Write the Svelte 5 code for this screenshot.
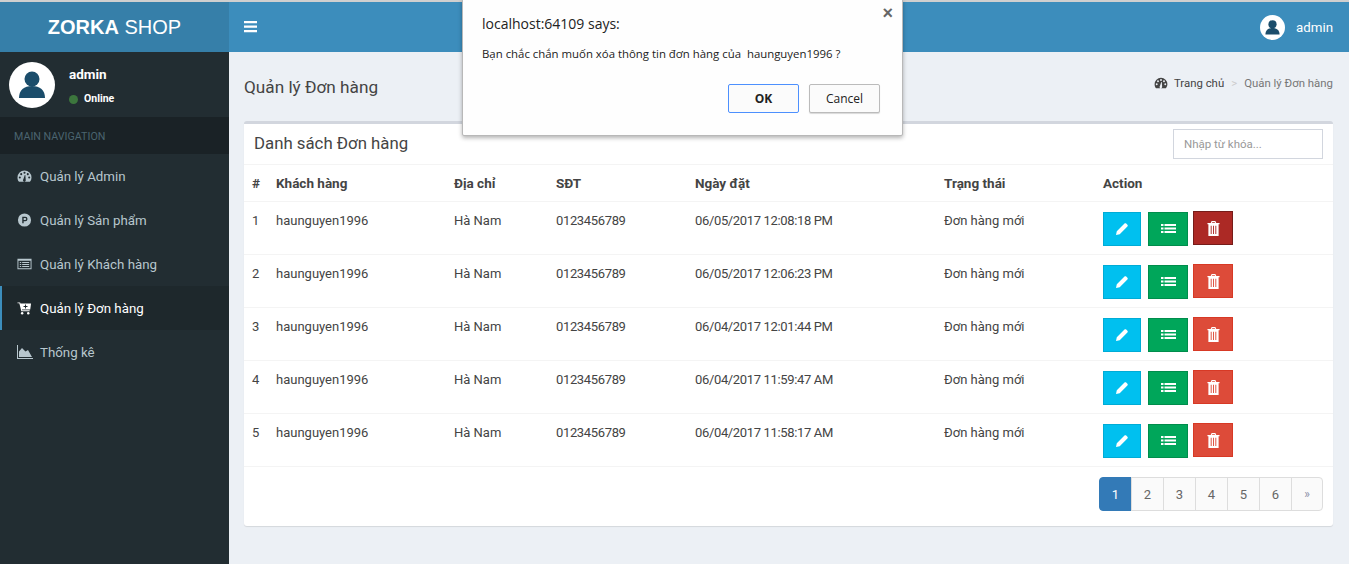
<script>
  const menu = [
    { label: "Quản lý Admin", icon: "gauge" },
    { label: "Quản lý Sản phẩm", icon: "product" },
    { label: "Quản lý Khách hàng", icon: "list" },
    { label: "Quản lý Đơn hàng", icon: "cart", active: true },
    { label: "Thống kê", icon: "chart" }
  ];

  const orders = [
    { id: 1, date: "06/05/2017 12:08:18 PM", hover: true },
    { id: 2, date: "06/05/2017 12:06:23 PM" },
    { id: 3, date: "06/04/2017 12:01:44 PM" },
    { id: 4, date: "06/04/2017 11:59:47 AM" },
    { id: 5, date: "06/04/2017 11:58:17 AM" }
  ];

  const pages = ["1", "2", "3", "4", "5", "6", "»"];
</script>

{#snippet avatar(cls)}
  <svg class={cls} viewBox="0 0 46 46" aria-hidden="true">
    <circle cx="23" cy="23" r="23" fill="#fff" />
    <circle cx="23" cy="17" r="7.5" fill="#1b4d6b" />
    <path d="M10 36c0-8 5-12 13-12s13 4 13 12z" fill="#1b4d6b" />
  </svg>
{/snippet}

{#snippet gauge(cls)}
  <svg class={cls} viewBox="0 0 16 14" aria-hidden="true">
    <path fill-rule="evenodd" fill="currentColor" d="M8 1a7.5 7.5 0 0 0-7.5 7.5c0 1.800.6 3.400 1.700 4.700h11.600a7.400 7.400 0 0 0 1.700-4.700A7.500 7.500 0 0 0 8 1zM3 9.600a1.100 1.100 0 1 1 0-2.200 1.100 1.100 0 0 1 0 2.200zm1.500-3.500a1.100 1.100 0 1 1 0-2.200 1.100 1.100 0 0 1 0 2.200zM8 4.600a1.100 1.100 0 1 1 0-2.200 1.100 1.100 0 0 1 0 2.200zm3.500 1.500a1.100 1.100 0 1 1 0-2.200 1.100 1.100 0 0 1 0 2.200zM13 9.600a1.100 1.100 0 1 1 0-2.200 1.100 1.100 0 0 1 0 2.200zM9.300 11.200a1.500 1.500 0 1 1-2.500-.7l1.500-4.700h.6z" />
  </svg>
{/snippet}

{#snippet icon(name)}
  {#if name === "gauge"}
    {@render gauge("nav-icon")}
  {:else if name === "product"}
    <svg class="nav-icon" viewBox="0 0 16 14" aria-hidden="true">
      <path fill-rule="evenodd" fill="currentColor" d="M8 0a7 7 0 1 1 0 14A7 7 0 0 1 8 0zM5.600 3.500v7h1.500V8.300h1.700a2.400 2.400 0 0 0 0-4.800zm1.500 1.300h1.600a1.100 1.100 0 0 1 0 2.200H7.100z" />
    </svg>
  {:else if name === "list"}
    <svg class="nav-icon" viewBox="0 0 16 14" aria-hidden="true">
      <path fill-rule="evenodd" fill="currentColor" d="M.5 1.500h15v11H.5zM1.500 3.500v8h13v-8zM3 4.800h1.500v1.100H3zm2.500 0H13v1.100H5.500zM3 6.900h1.500V8H3zm2.500 0H13V8H5.500zM3 9h1.500v1.100H3zm2.500 0H13v1.100H5.500z" />
    </svg>
  {:else if name === "cart"}
    <svg class="nav-icon" viewBox="0 0 16 14" aria-hidden="true">
      <path fill-rule="evenodd" fill="currentColor" d="M.5 1h2.800l.4 1.300H15l-.9 6.200H5.300l.2 1H13.500v1H4.600L2.500 2H.5zM8.600 3.200v1.700H7v1h1.600v1.700h1V5.900h1.600v-1H9.600V3.200z" />
      <circle cx="5.500" cy="12.500" r="1.300" fill="currentColor" />
      <circle cx="12" cy="12.500" r="1.300" fill="currentColor" />
    </svg>
  {:else}
    <svg class="nav-icon wide" viewBox="0 0 16 14" aria-hidden="true">
      <path fill="currentColor" d="M0 0h1v13h15v1H0z" />
      <path fill="currentColor" d="M2 12V6.500L5 3l3.500 3.500L11 5l4 7z" />
    </svg>
  {/if}
{/snippet}

<div class="page">
  <div class="top-strip"></div>

  <header class="topbar">
    <div class="logo"><b>ZORKA</b> SHOP</div>
    <div class="navbar">
      <svg class="burger" viewBox="0 0 14 12" aria-hidden="true">
        <path fill="#fff" d="M0 0h13v2.200H0zM0 4.500h13v2.200H0zM0 9h13v2.200H0z" />
      </svg>
      <div class="account">
        {@render avatar("avatar-small")}
        <span>admin</span>
      </div>
    </div>
  </header>

  <div class="body">
    <aside class="sidebar">
      <div class="user-panel">
        {@render avatar("avatar-large")}
        <div class="user-info">
          <div class="user-name">admin</div>
          <div class="user-status"><i class="dot"></i>Online</div>
        </div>
      </div>
      <div class="nav-header">MAIN NAVIGATION</div>
      <nav>
        {#each menu as item}
          <a class="nav-item" class:active={item.active} href="#top">
            {@render icon(item.icon)}
            <span>{item.label}</span>
          </a>
        {/each}
      </nav>
    </aside>

    <main class="content">
      <div class="content-head">
        <h1>Quản lý Đơn hàng</h1>
        <div class="breadcrumb">
          {@render gauge("crumb-icon")}
          <span class="crumb-link">Trang chủ</span>
          <span class="crumb-sep">&gt;</span>
          <span class="crumb-current">Quản lý Đơn hàng</span>
        </div>
      </div>

      <section class="card">
        <div class="card-head">
          <h2>Danh sách Đơn hàng</h2>
          <input class="search" type="text" placeholder="Nhập từ khóa..." />
        </div>
        <table>
          <thead>
            <tr>
              <th class="c-id">#</th>
              <th class="c-name">Khách hàng</th>
              <th class="c-addr">Địa chỉ</th>
              <th class="c-phone">SĐT</th>
              <th class="c-date">Ngày đặt</th>
              <th class="c-status">Trạng thái</th>
              <th>Action</th>
            </tr>
          </thead>
          <tbody>
            {#each orders as order}
              <tr>
                <td>{order.id}</td>
                <td>haunguyen1996</td>
                <td>Hà Nam</td>
                <td class="digits">0123456789</td>
                <td class="digits">{order.date}</td>
                <td>Đơn hàng mới</td>
                <td class="action-cell">
                  <div class="actions">
                    <button type="button" class="btn edit" aria-label="Sửa">
                      <svg viewBox="0 0 14 14" aria-hidden="true"><path fill="#fff" d="M1 13l.8-3.700L9.500 1.600c.5-.5 1.200-.5 1.700 0l1.200 1.200c.5.5.5 1.200 0 1.700L4.700 12.200z" /></svg>
                    </button>
                    <button type="button" class="btn detail" aria-label="Chi tiết">
                      <svg viewBox="0 0 15 12" aria-hidden="true"><path fill="#fff" d="M0 1h2.500v2H0zM3.500 1H15v2H3.500zM0 4.500h2.500v2H0zM3.500 4.500H15v2H3.500zM0 8h2.500v2H0zM3.500 8H15v2H3.500z" /></svg>
                    </button>
                    <button type="button" class="btn remove" class:hover={order.hover} aria-label="Xóa">
                      <svg viewBox="0 0 14 16" aria-hidden="true"><path fill-rule="evenodd" fill="#fff" d="M5 0h4l1 2h3.500v1.500h-1V16h-11V3.500h-1V2H4zM5.700 1.200L5.300 2h3.400l-.4-.8zM4 5v9h1V5zm2.500 0v9h1V5zM9 5v9h1V5z" /></svg>
                    </button>
                  </div>
                </td>
              </tr>
            {/each}
          </tbody>
        </table>
        <div class="pagination">
          {#each pages as page, i}
            <span class="page-link" class:current={i === 0} class:next={page === "»"}>{page}</span>
          {/each}
        </div>
      </section>
    </main>
  </div>

  <div class="dialog" role="alertdialog">
    <span class="dialog-close">×</span>
    <div class="dialog-title">localhost:64109 says:</div>
    <div class="dialog-text">Bạn chắc chắn muốn xóa thông tin đơn hàng của&nbsp; haunguyen1996 ?</div>
    <div class="dialog-buttons">
      <button type="button" class="ok">OK</button>
      <button type="button" class="cancel">Cancel</button>
    </div>
  </div>
</div>

<style>
  :global(body) {
    margin: 0;
    background: #ecf0f5;
  }

  .page {
    position: relative;
    height: 564px;
    overflow: hidden;
    display: flex;
    flex-direction: column;
    font-family: Roboto, "Noto Sans", sans-serif;
    font-size: 13px;
    color: #444;
  }

  .top-strip {
    height: 2px;
    background: #cfcfcf;
  }

  .topbar {
    display: flex;
    height: 50px;
    flex: none;
  }

  .logo {
    width: 229px;
    background: #367fa9;
    color: #fff;
    font-family: "Liberation Sans", Arial, sans-serif;
    font-size: 20px;
    line-height: 50px;
    text-align: center;
  }

  .navbar {
    flex: 1;
    display: flex;
    align-items: center;
    justify-content: space-between;
    background: #3c8dbc;
    padding: 0 16px 0 15px;
  }

  .burger {
    width: 14px;
    height: 12px;
  }

  .account {
    display: flex;
    align-items: center;
    gap: 11px;
    color: #fff;
    font-size: 13.3px;
  }

  .avatar-small {
    width: 25px;
    height: 25px;
  }

  .body {
    flex: 1;
    display: flex;
    min-height: 0;
  }

  .sidebar {
    width: 229px;
    flex: none;
    background: #222d32;
  }

  .user-panel {
    display: flex;
    height: 65px;
    align-items: center;
    padding-left: 9px;
    gap: 14px;
  }

  .avatar-large {
    width: 46px;
    height: 46px;
  }

  .user-info {
    color: #fff;
  }

  .user-name {
    font-weight: 700;
    font-size: 13.5px;
    line-height: 18px;
    margin-bottom: 9px;
  }

  .user-status {
    display: flex;
    align-items: center;
    gap: 6px;
    font-size: 10.5px;
    font-weight: 700;
    line-height: 14px;
    margin-bottom: -2px;
  }

  .dot {
    width: 9px;
    height: 9px;
    border-radius: 50%;
    background: #3c763d;
  }

  .nav-header {
    height: 37px;
    line-height: 39px;
    padding-left: 14px;
    background: #1a2226;
    color: #4b646f;
    font-size: 10.7px;
  }

  .nav-item {
    display: flex;
    align-items: center;
    height: 44px;
    padding-left: 17px;
    gap: 8px;
    color: #b8c7ce;
    font-size: 13.3px;
    text-decoration: none;
    box-sizing: border-box;
  }

  .nav-item.active {
    background: #1e282c;
    border-left: 2px solid #3c8dbc;
    padding-left: 15px;
    color: #fff;
  }

  .nav-icon {
    width: 15px;
    height: 14px;
  }

  .nav-icon.wide {
    width: 16px;
    margin-right: -1px;
  }

  .content {
    flex: 1;
    min-width: 0;
    padding: 0 16px 0 15px;
  }

  .content-head {
    display: flex;
    justify-content: space-between;
    align-items: center;
    height: 69px;
  }

  h1 {
    margin: 0 0 -1px;
    font-size: 17.2px;
    font-weight: 400;
    color: #444;
  }

  .breadcrumb {
    display: flex;
    align-items: center;
    font-size: 11.4px;
    margin-bottom: 8px;
    color: #444;
  }

  .crumb-icon {
    width: 14px;
    height: 12px;
    margin-right: 6px;
  }

  .crumb-sep {
    color: #ccc;
    margin: 0 7px;
  }

  .crumb-current {
    color: #777;
  }

  .card {
    background: #fff;
    border-top: 3px solid #d2d6de;
    border-radius: 3px;
    box-shadow: 0 1px 1px rgba(0, 0, 0, 0.1);
    height: 402px;
  }

  .card-head {
    display: flex;
    justify-content: space-between;
    align-items: center;
    height: 41px;
    box-sizing: border-box;
    padding: 0 10px;
    border-bottom: 1px solid #f4f4f4;
  }

  h2 {
    margin: 0 0 2px;
    font-size: 16.8px;
    font-weight: 400;
    color: #444;
  }

  .search {
    width: 150px;
    height: 30px;
    box-sizing: border-box;
    border: 1px solid #d2d6de;
    padding: 0 10px;
    font: inherit;
    font-size: 11.5px;
    outline: none;
  }

  .search::placeholder {
    color: #999;
  }

  table {
    width: 100%;
    border-collapse: collapse;
    table-layout: fixed;
  }

  th {
    height: 36px;
    padding: 0 8px;
    text-align: left;
    font-size: 13.5px;
    font-weight: 700;
    border-bottom: 1px solid #f4f4f4;
  }

  td {
    height: 53px;
    padding: 11px 8px 0;
    box-sizing: border-box;
    vertical-align: top;
    border-bottom: 1px solid #f4f4f4;
  }

  td.action-cell {
    padding-top: 10px;
  }

  .digits {
    letter-spacing: -0.35px;
  }

  .c-id { width: 8px; }
  .c-name { width: 162px; }
  .c-addr { width: 86px; }
  .c-phone { width: 123px; }
  .c-date { width: 233px; }
  .c-status { width: 143px; }

  .actions {
    display: flex;
    gap: 5px;
    align-items: flex-start;
  }

  .btn {
    display: flex;
    align-items: center;
    justify-content: center;
    padding: 0;
    height: 34px;
    border: 1px solid;
  }

  .btn svg {
    width: 14px;
    height: 14px;
  }

  .edit {
    width: 38px;
    background: #00c0ef;
    border-color: #00acd6;
    margin-right: 2px;
  }

  .detail {
    width: 40px;
    background: #00a65a;
    border-color: #008d4c;
  }

  .detail svg {
    width: 15px;
    height: 12px;
  }

  .remove {
    width: 40px;
    margin-top: -1px;
    background: #dd4b39;
    border-color: #d73925;
  }

  .remove svg {
    width: 13px;
    height: 15px;
  }

  .remove.hover {
    background: #ac2925;
    border-color: #761c19;
  }

  .pagination {
    display: flex;
    justify-content: flex-end;
    margin: 10px 10px 0 0;
  }

  .page-link {
    display: flex;
    align-items: center;
    justify-content: center;
    width: 33px;
    height: 34px;
    box-sizing: border-box;
    background: #fafafa;
    border: 1px solid #ddd;
    margin-left: -1px;
    color: #666;
  }

  .page-link.current {
    background: #337ab7;
    border-color: #337ab7;
    color: #fff;
    border-radius: 4px 0 0 4px;
    width: 33px;
  }

  .page-link.next {
    border-radius: 0 4px 4px 0;
    color: #8a8fa8;
    font-size: 12px;
    width: 32px;
  }

  .dialog {
    position: absolute;
    left: 462px;
    top: -1px;
    width: 441px;
    height: 137px;
    box-sizing: border-box;
    padding: 15px 19px 0;
    background: #fefefe;
    border: 1px solid #b8b8b8;
    border-radius: 0 0 2px 2px;
    box-shadow: 0 2px 4px rgba(0, 0, 0, 0.3);
    font-family: "Open Sans", "Noto Sans", sans-serif;
    color: #222;
  }

  .dialog-close {
    position: absolute;
    right: 9px;
    top: 3px;
    font-family: "Liberation Sans", sans-serif;
    font-size: 18px;
    font-weight: 700;
    color: #666;
  }

  .dialog-title {
    font-size: 14px;
    line-height: 18px;
  }

  .dialog-text {
    font-size: 11.4px;
    line-height: 16px;
    margin-top: 13px;
  }

  .dialog-buttons {
    display: flex;
    justify-content: flex-end;
    gap: 10px;
    margin-top: 22px;
    margin-right: 3px;
  }

  .dialog-buttons button {
    width: 71px;
    height: 29px;
    padding: 0;
    font-family: inherit;
    font-size: 12px;
    color: #222;
    background: #fbfbfb;
    border-radius: 2px;
  }

  .ok {
    border: 1px solid #4d90fe;
    font-weight: 700;
  }

  .cancel {
    border: 1px solid #bbb;
    box-shadow: 0 1px 1px rgba(0, 0, 0, 0.15);
  }
</style>
